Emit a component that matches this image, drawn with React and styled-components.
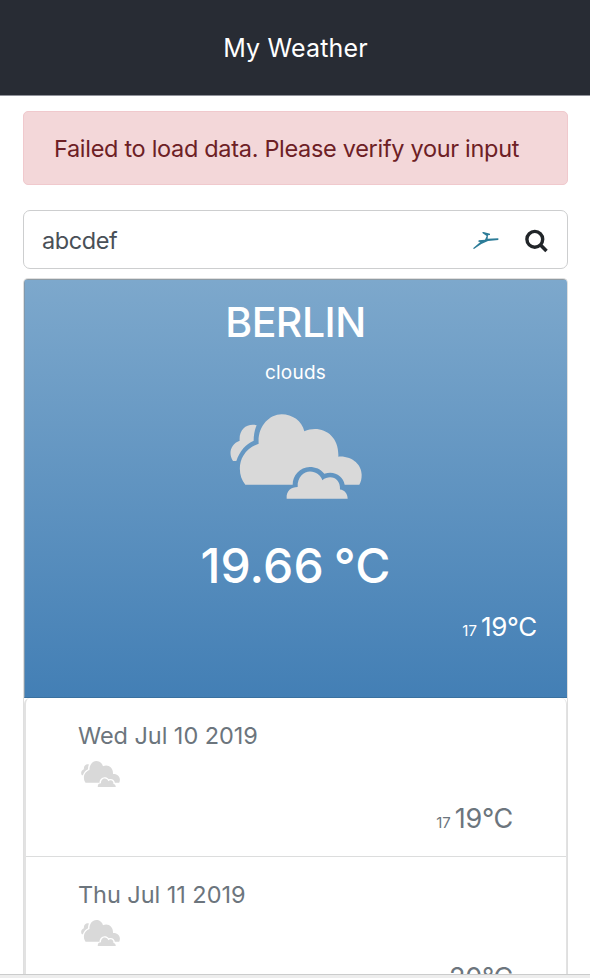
import React from "react";
import styled, { createGlobalStyle } from "styled-components";

const GlobalStyle = createGlobalStyle`
  *, *::before, *::after { box-sizing: border-box; }
  html, body { margin: 0; padding: 0; }
  body { background: #fff; font-family: Inter, "Liberation Sans", sans-serif; color: #212529; }
  h1, h2, p { margin: 0; font-weight: 400; }
`;

const Page = styled.div`
  height: 978px;
  display: flex;
  flex-direction: column;
  overflow: hidden;
`;

const Header = styled.header`
  flex: none;
  height: 96px;
  display: flex;
  align-items: center;
  justify-content: center;
  background: #282c34;
  border-bottom: 1px solid #90929a;
`;

const Title = styled.h1`
  padding-left: 1px;
  font-size: 25px;
  line-height: 36px;
  letter-spacing: 0.15px;
  color: #fff;
`;

const Content = styled.main`
  flex: 1;
  min-height: 0;
  display: flex;
  flex-direction: column;
  padding: 15px 22px 0 23px;
  overflow: hidden;
`;

const Alert = styled.div`
  flex: none;
  height: 74px;
  display: flex;
  align-items: center;
  padding: 1px 0 0 30px;
  margin-bottom: 25px;
  border: 1px solid #f0c9cd;
  border-radius: 5px;
  background: #f3d7d9;
  color: #6d2025;
  font-size: 23.5px;
  letter-spacing: -0.31px;
  white-space: nowrap;
`;

const SearchBox = styled.form`
  flex: none;
  height: 59px;
  margin-bottom: 9px;
  display: flex;
  align-items: center;
  padding: 2px 18px 0 18px;
  border: 1px solid #cdcecf;
  border-radius: 7px;
`;

const SearchInput = styled.input`
  flex: 1;
  min-width: 0;
  padding: 0;
  border: 0;
  outline: 0;
  background: transparent;
  color: #495057;
  font: 400 23.5px/34px Inter, sans-serif;
  letter-spacing: -0.4px;
`;

const SearchIcons = styled.div`
  display: flex;
  align-items: center;
  gap: 26px;
`;

const Panel = styled.section`
  flex: 1;
  min-height: 0;
  display: flex;
  flex-direction: column;
  border: 1px solid #dfdfdf;
  border-bottom: 0;
  border-radius: 5px 5px 0 0;
  overflow: hidden;
`;

const Current = styled.article`
  flex: none;
  height: 419px;
  display: flex;
  flex-direction: column;
  align-items: center;
  padding: 15px 1px 0 0;
  color: #fff;
  background: linear-gradient(#7da8cc, #437fb5);
  border-top: 1px solid #8f9ba3;
  border-left: 1px solid #8199ad;
  border-bottom: 1px solid #3a719f;
`;

const City = styled.h2`
  font-size: 41px;
  line-height: 54px;
  font-weight: 500;
  letter-spacing: -0.5px;
`;

const Condition = styled.p`
  margin: 11px 0 28px;
  font-size: 19px;
  line-height: 26px;
  letter-spacing: 0.25px;
`;

const Temperature = styled.p`
  margin-top: 38px;
  font-size: 48px;
  line-height: 58px;
  font-weight: 500;
  letter-spacing: 0.15px;
  word-spacing: -3px;
`;

const Range = styled.div`
  align-self: flex-end;
  display: flex;
  align-items: baseline;
  gap: 4px;
  line-height: 36px;
  margin-top: ${(p) => p.$top}px;
  margin-right: ${(p) => p.$right}px;
`;

const Low = styled.span`
  font-size: 15px;
`;

const High = styled.span`
  font-size: ${(p) => p.$size}px;
  letter-spacing: -0.3px;
`;

const Forecast = styled.div`
  flex: none;
  border: solid #e2e2e2;
  border-width: 0 1px 0 2px;
  border-radius: 6px 6px 0 0;
`;

const Day = styled.article`
  height: 159px;
  display: flex;
  flex-direction: column;
  align-items: flex-start;
  padding: 20px 0 0 52px;
  border-bottom: 1px solid #dcdddd;
  color: #6c757d;
`;

const DayName = styled.h2`
  font-size: 23.5px;
  line-height: 36px;
  letter-spacing: -0.05px;
`;

const DayIcon = styled.div`
  display: flex;
  margin: 7px 0 0 3px;
`;

const BottomBar = styled.footer`
  flex: none;
  height: 4px;
  background: #ededed;
  border-top: 1px solid #cbcccc;
`;

function CloudIcon({ width, height }) {
  return (
    <svg width={width} height={height} viewBox="58 41 396 257" fill="#d9d9d9" preserveAspectRatio="none">
      <path d="M104 255C76 220 80 154 144 131C140 80 175 42 213 42C245 42 274 62 281 93C330 72 386 101 383 170C425 167 453 195 453 225C453 238 451 247 446 255H402C398 228 370 211 341 222C330 207 315 201 297 201C268 202 246 226 246 255Z" />
      <path d="M228 297C226 273 242 262 261 262C259 232 280 215 298 215C316 215 330 226 335 241C360 222 390 236 388 269C402 271 411 281 411 297Z" />
      <path d="M138 75C110 68 84 86 87 122C60 132 52 160 67 183H77C88 152 105 133 129 122C129 105 132 88 138 75Z" />
    </svg>
  );
}

function LeapIcon() {
  return (
    <svg width="26" height="18" viewBox="98 93 78 54" fill="#2c7c98">
      <path d="M98 142L120 123L114 122L115 118L134 116L139 105L127 97L126 92L149 98L149 102L143 103L142 113L174 112V117L143 120L123 129L101 144Z" />
    </svg>
  );
}

function MagnifierIcon() {
  return (
    <svg width="24" height="24" viewBox="0 0 24 24" fill="none" stroke="#212529">
      <circle cx="9.8" cy="10.3" r="7.9" strokeWidth="3.4" />
      <path d="M15.8 16.3L21.5 22" strokeWidth="3.6" />
    </svg>
  );
}

const days = [
  { name: "Wed Jul 10 2019", low: 17, high: 19 },
  { name: "Thu Jul 11 2019", low: null, high: 20 },
];

export default function App() {
  return (
    <>
      <GlobalStyle />
      <Page>
        <Header><Title>My Weather</Title></Header>
        <Content>
          <Alert>Failed to load data. Please verify your input</Alert>
          <SearchBox>
            <SearchInput defaultValue="abcdef" />
            <SearchIcons><LeapIcon /><MagnifierIcon /></SearchIcons>
          </SearchBox>
          <Panel>
            <Current>
              <City>BERLIN</City>
              <Condition>clouds</Condition>
              <CloudIcon width={132} height={85} />
              <Temperature>19.66 °C</Temperature>
              <Range $top={14} $right={29}><Low>17</Low><High $size={26}>19°C</High></Range>
            </Current>
            <Forecast>
              {days.map((day) => (
                <Day key={day.name}>
                  <DayName>{day.name}</DayName>
                  <DayIcon><CloudIcon width={39} height={26} /></DayIcon>
                  <Range $top={14} $right={53}>
                    {day.low !== null && <Low>{day.low}</Low>}
                    <High $size={27}>{day.high}°C</High>
                  </Range>
                </Day>
              ))}
            </Forecast>
          </Panel>
        </Content>
        <BottomBar />
      </Page>
    </>
  );
}
